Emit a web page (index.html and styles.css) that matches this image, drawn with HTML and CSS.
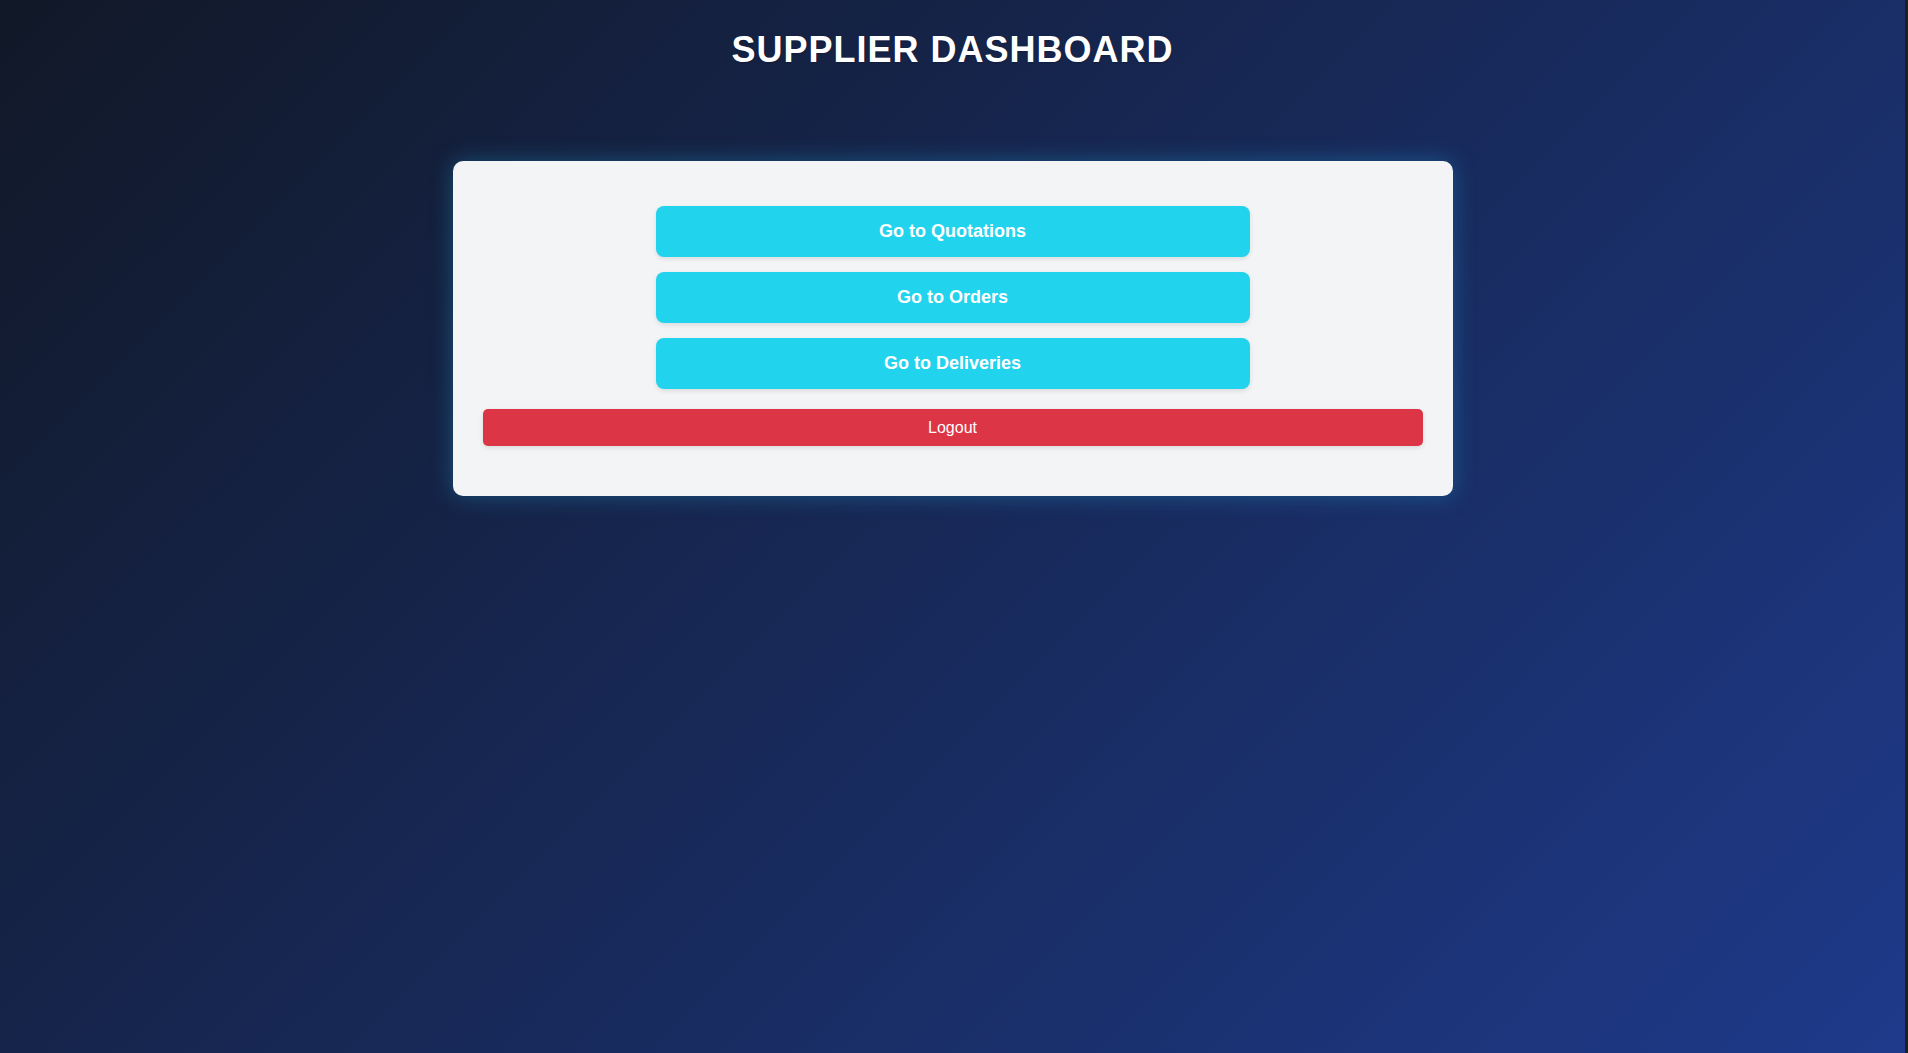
FILE: index.html
```html
<!DOCTYPE html>
<html lang="en">
<head>
<meta charset="utf-8">
<title>Supplier Dashboard</title>
<link rel="stylesheet" href="styles.css">
</head>
<body>
<div class="page">
  <main class="app">
    <h1 class="title">SUPPLIER DASHBOARD</h1>
    <section class="card">
      <nav class="nav">
        <button class="nav-btn">Go to Quotations</button>
        <button class="nav-btn">Go to Orders</button>
        <button class="nav-btn">Go to Deliveries</button>
      </nav>
      <button class="logout">Logout</button>
    </section>
  </main>
  <div class="edge"></div>
</div>
</body>
</html>
```

FILE: styles.css
```css
html, body {
  margin: 0;
  padding: 0;
  height: 100%;
}
body {
  font-family: "Liberation Sans", Arial, sans-serif;
  background: #1c1c1e;
}
.page {
  display: flex;
  min-height: 100vh;
}
.app {
  flex: 1;
  background: linear-gradient(135deg, #111827 0%, #1e3a8a 100%);
  display: flex;
  flex-direction: column;
  align-items: center;
}
.edge {
  width: 3px;
  background: #1d1f23;
}
.title {
  margin: 29px 0 91px;
  font-size: 36px;
  font-weight: 700;
  letter-spacing: 1px;
  color: #ffffff;
  line-height: 41px;
  text-shadow: 0 1px 2px rgba(0,0,0,0.2);
}
.card {
  width: 1000px;
  box-sizing: border-box;
  padding: 45px 30px 30px;
  background: #f3f4f6;
  border-radius: 10px;
  box-shadow: 0 0 22px rgba(34, 170, 220, 0.35);
  display: flex;
  flex-direction: column;
}
.nav {
  display: flex;
  flex-direction: column;
  align-items: center;
  gap: 15px;
}
.nav-btn {
  width: 594px;
  padding: 15px 0;
  line-height: 21px;
  border: none;
  border-radius: 8px;
  background: #22d3ee;
  color: #ffffff;
  font-family: "Liberation Sans", Arial, sans-serif;
  font-size: 18px;
  font-weight: 700;
  box-shadow: 0 2px 5px rgba(0,0,0,0.1);
  cursor: pointer;
}
.logout {
  margin: 20px 0 20px;
  padding: 10px 0;
  line-height: 17px;
  border: none;
  border-radius: 5px;
  background: #dc3545;
  color: #ffffff;
  font-family: "Liberation Sans", Arial, sans-serif;
  font-size: 16px;
  box-shadow: 0 2px 5px rgba(0,0,0,0.1);
  cursor: pointer;
}
```
